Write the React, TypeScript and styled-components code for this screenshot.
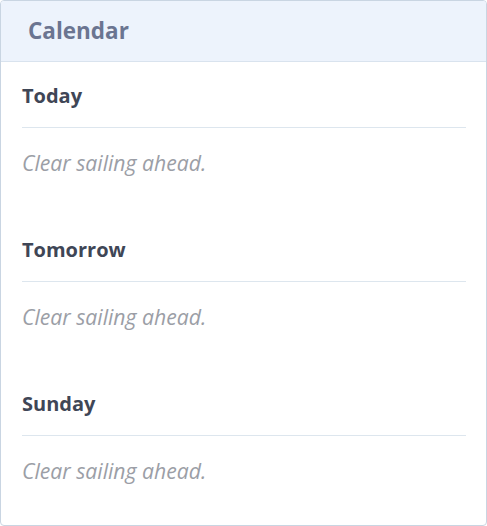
import React from "react";
import styled, { createGlobalStyle } from "styled-components";

const GlobalStyle = createGlobalStyle`
  html, body {
    margin: 0;
    padding: 0;
    background: #ffffff;
  }
  body {
    font-family: "Open Sans", "Noto Sans", sans-serif;
  }
`;

const days = ["Today", "Tomorrow", "Sunday"];

function App(): JSX.Element {
  return (
    <>
      <GlobalStyle />
      <Card>
        <Header>
          <Title>Calendar</Title>
        </Header>
        <Body>
          {days.map((day) => (
            <Section key={day}>
              <DayHeading>{day}</DayHeading>
              <EmptyNote>Clear sailing ahead.</EmptyNote>
            </Section>
          ))}
        </Body>
      </Card>
    </>
  );
}

export default App;

const Card = styled.div`
  box-sizing: border-box;
  width: 487px;
  height: 526px;
  border: 1px solid #c9d5e2;
  border-radius: 4px;
  background: #ffffff;
  overflow: hidden;
  display: flex;
  flex-direction: column;
`;

const Header = styled.div`
  box-sizing: border-box;
  height: 61px;
  display: flex;
  align-items: center;
  padding: 0 27px;
  background: #edf3fc;
  border-bottom: 1px solid #d9e3ee;
`;

const Title = styled.h2`
  margin: 0;
  font-size: 22.5px;
  font-weight: 700;
  color: #6b7591;
  line-height: 24px;
`;

const Body = styled.div`
  padding: 22px 20px 0 21px;
  display: flex;
  flex-direction: column;
  gap: 63px;
`;

const Section = styled.section`
  display: flex;
  flex-direction: column;
`;

const DayHeading = styled.h3`
  margin: 0;
  padding-bottom: 19px;
  border-bottom: 1px solid #dde6ee;
  font-size: 20px;
  font-weight: 700;
  line-height: 24px;
  color: #3f4656;
`;

const EmptyNote = styled.p`
  margin: 23px 0 0;
  font-size: 21.2px;
  font-style: italic;
  line-height: 24px;
  color: #9b9ea6;
`;
